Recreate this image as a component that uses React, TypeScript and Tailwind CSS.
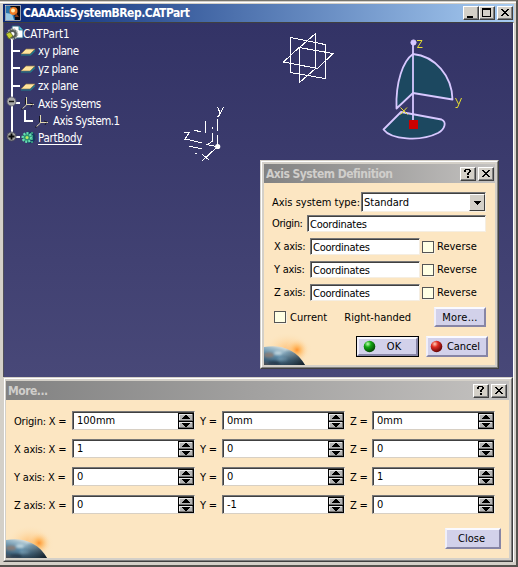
import React from 'react';

function WinButton({ kind }: { kind: 'min' | 'max' | 'close' | 'help' }) {
  return (
    <div className="relative h-[14px] w-[16px] shrink-0 border border-t-white border-l-white border-r-[#404040] border-b-[#404040] bg-[#d4d0c8]">
      <div className="h-full w-full border-r border-b border-[#808080]">
        <svg width="14" height="12" viewBox="0 0 14 12" className="block" shapeRendering="crispEdges" aria-hidden="true">
          {kind === 'min' && <rect x="3" y="9" width="6" height="2" fill="#000" />}
          {kind === 'max' && <path d="M2 1h9v9H2zM3 3v6h7V3z" fill="#000" fillRule="evenodd" />}
          {kind === 'close' && (
            <path
              d="M3 2h2v1h-2zM9 2h2v1h-2zM4 3h2v1h-2zM8 3h2v1h-2zM5 4h4v1h-4zM6 5h2v1h-2zM5 6h4v1h-4zM4 7h2v1h-2zM8 7h2v1h-2zM3 8h2v1h-2zM9 8h2v1h-2z"
              fill="#000"
            />
          )}
          {kind === 'help' && (
            <path d="M4 1h5v1h-5zM3 2h2v2h-2zM8 2h2v2h-2zM7 4h2v1h-2zM6 5h2v2h-2zM6 8h2v2h-2z" fill="#000" />
          )}
        </svg>
      </div>
    </div>
  );
}

function DialogTitle({ text, className }: { text: string; className: string }) {
  return (
    <div className={'flex h-[19px] shrink-0 items-center bg-linear-to-r from-[#828282] to-[#c4c2c0] pl-[2px] ' + className}>
      <span className="grow text-[12px] font-bold whitespace-nowrap text-[#d0cecb]">{text}</span>
      <div className="flex gap-[2px]">
        <WinButton kind="help" />
        <WinButton kind="close" />
      </div>
    </div>
  );
}

function TextField({ value, className }: { value: string; className: string }) {
  return (
    <div
      className={
        'flex shrink-0 items-center border border-t-[#777] border-l-[#777] border-r-[#f5eee2] border-b-[#f5eee2] bg-white ' +
        className
      }
    >
      <div className="flex h-full w-full items-center border-t border-l border-[#404040] pl-px leading-none">
        {value}
      </div>
    </div>
  );
}

function CheckBox() {
  return (
    <div className="size-[12px] shrink-0 border border-[#555] bg-[#ffffe4] shadow-[1px_1px_0_#f8f0e0]" />
  );
}

function PushButton({ children, className }: { children: React.ReactNode; className: string }) {
  return (
    <div
      className={
        'flex shrink-0 items-center justify-center border-2 border-t-[#fafaff] border-l-[#f0effa] border-r-[#8785a5] border-b-[#8785a5] bg-[#d2d1ea] leading-none ' +
        className
      }
    >
      {children}
    </div>
  );
}

function Lamp({ id, light, mid, dark }: { id: string; light: string; mid: string; dark: string }) {
  return (
    <svg width="13" height="13" viewBox="0 0 13 13" className="shrink-0" aria-hidden="true">
      <defs>
        <radialGradient id={id} cx="0.35" cy="0.28" r="0.7">
          <stop offset="0" stopColor={light} />
          <stop offset="0.4" stopColor={mid} />
          <stop offset="1" stopColor={dark} />
        </radialGradient>
      </defs>
      <circle cx="6.5" cy="6.5" r="5.8" fill={'url(#' + id + ')'} />
    </svg>
  );
}

function Planet({ id }: { id: string }) {
  return (
    <svg width="56" height="40" viewBox="0 0 56 40" className="absolute bottom-0 left-0" aria-hidden="true">
      <defs>
        <radialGradient id={id + 'g'} cx="0.5" cy="0.5" r="0.5">
          <stop offset="0" stopColor="#ff9430" />
          <stop offset="0.35" stopColor="#ffb860" stopOpacity="0.75" />
          <stop offset="1" stopColor="#fde7c2" stopOpacity="0" />
        </radialGradient>
        <linearGradient id={id + 'p'} gradientUnits="userSpaceOnUse" x1="14" y1="20" x2="8" y2="42">
          <stop offset="0" stopColor="#e4e6e0" />
          <stop offset="0.2" stopColor="#9fbccb" />
          <stop offset="0.5" stopColor="#5d8aa6" />
          <stop offset="0.8" stopColor="#3c5c74" />
          <stop offset="1" stopColor="#4c4c50" />
        </linearGradient>
        <linearGradient id={id + 's'} gradientUnits="userSpaceOnUse" x1="22" y1="24" x2="40" y2="40">
          <stop offset="0" stopColor="#101820" stopOpacity="0" />
          <stop offset="1" stopColor="#101820" stopOpacity="0.95" />
        </linearGradient>
        <filter id={id + 'b'}>
          <feGaussianBlur stdDeviation="0.9" />
        </filter>
        <clipPath id={id + 'c'}>
          <path d="M0 22 C16 19 32 24 41 40 L0 40Z" />
        </clipPath>
      </defs>
      <ellipse cx="24" cy="25" rx="25" ry="18" fill={'url(#' + id + 'g)'} opacity="0.5" />
      <circle cx="33" cy="25" r="12" fill={'url(#' + id + 'g)'} />
      <g clipPath={'url(#' + id + 'c)'}>
        <rect y="18" width="44" height="22" fill={'url(#' + id + 'p)'} />
        <g filter={'url(#' + id + 'b)'}>
          <ellipse cx="5" cy="30" rx="5" ry="2.5" fill="#9a7a68" opacity="0.7" />
          <ellipse cx="14" cy="28" rx="4" ry="2" fill="#c8dce4" opacity="0.8" />
          <ellipse cx="19" cy="34" rx="5" ry="2" fill="#84aec6" opacity="0.7" />
          <ellipse cx="10" cy="38" rx="6" ry="2" fill="#24384a" opacity="0.8" />
          <ellipse cx="25" cy="28" rx="4" ry="1.5" fill="#7aa6c0" opacity="0.7" />
        </g>
        <rect y="18" width="44" height="22" fill={'url(#' + id + 's)'} />
      </g>
    </svg>
  );
}

function Spinner({ value }: { value: string }) {
  return (
    <div className="flex h-[19px] w-[123px] shrink-0 border border-t-[#777] border-l-[#777] border-r-[#f5eee2] border-b-[#d8d0c4] bg-white">
      <div className="flex w-full border-t border-l border-[#404040]">
        <div className="grow pt-px pl-[3px] leading-[14px]">{value}</div>
        <svg width="16" height="16" viewBox="0 0 16 16" className="shrink-0" shapeRendering="crispEdges" aria-hidden="true">
          <rect width="16" height="16" fill="#000" />
          <path d="M1 1h14v7h-14zM1 9h14v6h-14z" fill="#707070" />
          <path d="M1 1h13v6h-13zM1 9h13v5h-13z" fill="#e8e8e8" />
          <path d="M2 2h12v5h-12zM2 10h12v4h-12z" fill="#b4b4b4" />
          <path d="M7 2h2v1h1v1h1v1h1v1H4v-1h1v-1h1v-1h1zM4 10h8v1h-1v1h-1v1h-1v1h-2v-1h-1v-1h-1v-1h-1z" fill="#000" />
        </svg>
      </div>
    </div>
  );
}

const treeItems: { label: string; cls: string }[] = [
  { label: 'CATPart1', cls: 'pl-[19px] tracking-[0px]' },
  { label: 'xy plane', cls: 'pl-[34px] tracking-[-0.45px]' },
  { label: 'yz plane', cls: 'pl-[34px] tracking-[-0.45px]' },
  { label: 'zx plane', cls: 'pl-[34px] tracking-[-0.45px]' },
  { label: 'Axis Systems', cls: 'pl-[34px] tracking-[-0.5px]' },
  { label: 'Axis System.1', cls: 'pl-[49px] tracking-[-0.5px]' },
  { label: 'PartBody', cls: 'pl-[34px] tracking-[-0.3px] underline underline-offset-2' },
];

function PlaneIcon({ y }: { y: number }) {
  return (
    <g transform={'translate(0 ' + y + ')'}>
      <path d="M21 5L26 0H35L30 5Z" fill="#ffe49c" stroke="#8f7850" strokeWidth="0.7" />
      <path d="M21 6H30.5L35 1.5" stroke="#20808c" strokeWidth="1.2" fill="none" />
    </g>
  );
}

function AxisIcon({ x, y }: { x: number; y: number }) {
  return (
    <g transform={'translate(' + x + ' ' + y + ')'} fill="none" strokeWidth="1">
      <path d="M5.5 0V8L1 12M5.5 7.5H13" stroke="#e0d8b0" />
      <path d="M4.5 1V7M0 12H2M9 6L12 7M11 8L10 10" stroke="#171722" />
    </g>
  );
}

function Scene() {
  return (
    <svg width="510" height="355" viewBox="4 23 510 355" className="absolute inset-0" aria-hidden="true">
      {/* specification tree branches */}
      <g stroke="#fff" strokeWidth="2" fill="none" shapeRendering="crispEdges">
        <path d="M12 38V137M12 51H20M12 68H20M12 86H20M12 103H20M12 137H20M25 110V121H33" />
      </g>
      <path d="M12 26H19L23 30V38H12Z" fill="#fff" stroke="#28607c" strokeWidth="1" />
      <path d="M19 26V30H23" fill="#58c8dc" stroke="#28607c" strokeWidth="0.7" />
      <circle cx="12.5" cy="34" r="5" fill="#565c58" stroke="#adb1ac" strokeWidth="1.6" strokeDasharray="2 1" />
      <circle cx="12.5" cy="34" r="2" fill="#fff" />
      <path d="M6 34L10 32L13 36L9 39Z" fill="#c6cf30" stroke="#586020" strokeWidth="0.8" />
      <PlaneIcon y={49} />
      <PlaneIcon y={66} />
      <PlaneIcon y={84} />
      <AxisIcon x={21} y={97} />
      <AxisIcon x={35} y={115} />
      <g>
        <circle cx="11.5" cy="101.5" r="4.5" fill="#a8a8a8" stroke="#555566" strokeWidth="0.8" />
        <path d="M9 101.5H14" stroke="#111" strokeWidth="1.5" />
        <circle cx="11.5" cy="136.5" r="4.5" fill="#989898" stroke="#444455" strokeWidth="0.8" />
        <path d="M8.5 136.5H14.5M11.5 133.5V139.5" stroke="#080808" strokeWidth="1.8" />
      </g>
      <circle cx="29.5" cy="137.5" r="6" fill="#123c60" />
      <circle cx="27" cy="137.5" r="4.3" fill="#2c9270" stroke="#66ddb2" strokeWidth="2.4" strokeDasharray="2 1.2" />
      <circle cx="27" cy="137.5" r="1.5" fill="#bdeb60" />
      <path d="M32 132V144" stroke="#44b88c" strokeWidth="1.4" strokeDasharray="2 1" />

      {/* reference planes */}
      <g stroke="#fff" fill="none" strokeWidth="1" shapeRendering="crispEdges">
        <path d="M290.5 37.5L325 44.5V78.5L290.5 72.5Z" />
        <path d="M315.5 33.5V68.5L299.5 82.5V47.5Z" />
        <path d="M283.5 62L299 47.5L333 53.5L317.5 68.5Z" />
      </g>

      {/* model axis system */}
      <g stroke="#fff" fill="none" strokeWidth="1" shapeRendering="crispEdges">
        <path d="M217.5 119V131M217.5 135V145M205.5 121V133M212.5 127V129M212.5 133V141L207 145" />
        <path d="M194 130L201 132M190 140L202 143M206 144.5L217 146.5M189 146L202 149M195 153.5H197M217 147L202 161M202.5 154.5L209.5 160.5" />
        <path d="M184 132.5H189.5L184.5 139.5H190" />
        <path d="M217.5 107L220.5 114M223.5 107L218.5 116.5H217" />
      </g>
      <circle cx="217.7" cy="146.5" r="2.6" fill="#fff" />

      {/* compass */}
      <g fill="#1c4860" stroke="#d8c8ff" strokeWidth="1.8" strokeLinejoin="round">
        <path d="M413 54C403 61 395.5 82 396.5 108.5L413 93L452.5 99.5C452 76 435 56 413 54Z" />
        <path d="M401 112L383.5 129.5C391 139.5 420 142 438 133C445 129 447 122 441.5 119.5Z" />
        <path d="M413 44V121" fill="none" />
        <circle cx="413.5" cy="42.5" r="2.6" fill="#d8c8ff" strokeWidth="1" />
      </g>
      <rect x="409" y="120" width="9" height="9" fill="#cc0000" />
      <g stroke="#e8e030" fill="none" strokeWidth="1">
        <path d="M417 40.5H422L417.5 47.5H422.5" />
        <path d="M400.5 107.5L407.5 114.5M407 107.5L400.5 114.5" />
        <path d="M455.5 98L458.5 104M461.5 98L457.5 107.5H455.5" />
      </g>
    </svg>
  );
}

const axisRows = ['X axis:', 'Y axis:', 'Z axis:'];

function AxisDialog() {
  return (
    <div className="absolute top-[137px] left-[256px] h-[209px] w-[239px] border border-t-[#d4d0c8] border-l-[#d4d0c8] border-r-[#404040] border-b-[#404040] bg-[#d4d0c8]">
      <div className="flex h-full flex-col border border-t-white border-l-white border-r-[#808080] border-b-[#808080] p-[2px]">
        <DialogTitle text="Axis System Definition" className="pr-px tracking-[-0.52px]" />
        <div className="relative grow bg-[#fce6c2]">
          <Planet id="a" />
          <div className="relative flex flex-col pr-[9px]">
            <div className="mt-[9px] flex h-[20px] items-center pl-[8px]">
              <span className="w-[90px] whitespace-nowrap">Axis system type:</span>
              <div className="relative h-[20px] w-[125px]">
                <TextField value="Standard" className="h-[20px] w-[125px]" />
                <div className="absolute top-[2px] right-[1px] flex h-[17px] w-[16px] items-center justify-center border border-t-white border-l-white border-r-[#404040] border-b-[#404040] bg-[#d4d0c8]">
                  <svg width="7" height="4" viewBox="0 0 7 4" shapeRendering="crispEdges" aria-hidden="true">
                    <path d="M0 0h7v1h-1v1h-1v1h-1v1h-1v-1h-1v-1h-1v-1h-1z" fill="#000" />
                  </svg>
                </div>
              </div>
            </div>
            <div className="mt-[3px] flex h-[17px] items-center pl-[8px]">
              <span className="w-[36px] tracking-[-0.4px]">Origin:</span>
              <TextField value="Coordinates" className="h-[17px] w-[179px] tracking-[-0.25px]" />
            </div>
            <div className="mt-[6px] flex flex-col gap-[6px]">
              {axisRows.map((label) => (
                <div key={label} className="flex h-[17px] items-center pl-[10px]">
                  <span className="w-[36px] tracking-[-0.25px] whitespace-nowrap">{label}</span>
                  <TextField value="Coordinates" className="mr-[2px] h-[17px] w-[110px] tracking-[-0.25px]" />
                  <CheckBox />
                  <span className="pl-[3px]">Reverse</span>
                </div>
              ))}
            </div>
            <div className="mt-[6px] flex h-[20px] items-center pl-[10px]">
              <CheckBox />
              <span className="w-[59px] pl-[4px]">Current</span>
              <span className="w-[91px] whitespace-nowrap">Right-handed</span>
              <PushButton className="h-[20px] w-[52px] tracking-[0.2px]">More...</PushButton>
            </div>
            <div className="mt-[9px] flex h-[21px] gap-[7px] pl-[92px]">
              <div className="border border-black">
                <PushButton className="h-[19px] w-[61px] gap-[11px] pr-[11px]">
                  <Lamp id="ok" light="#c0ffb0" mid="#12a812" dark="#064c06" />
                  OK
                </PushButton>
              </div>
              <PushButton className="h-[21px] w-[62px] gap-[4px] pr-[4px] tracking-[-0.1px]">
                <Lamp id="cancel" light="#ffd0b8" mid="#e02c20" dark="#6c0808" />
                Cancel
              </PushButton>
            </div>
          </div>
        </div>
      </div>
    </div>
  );
}

const coordinateRows = [
  { label: 'Origin: X =', values: ['100mm', '0mm', '0mm'] },
  { label: 'X axis: X =', values: ['1', '0', '0'] },
  { label: 'Y axis: X =', values: ['0', '0', '1'] },
  { label: 'Z axis: X =', values: ['0', '-1', '0'] },
];

function MoreDialog() {
  return (
    <div className="relative h-[185px] w-[510px] border border-t-[#d4d0c8] border-l-[#d4d0c8] border-r-[#404040] border-b-[#404040] bg-[#d4d0c8]">
      <div className="flex h-full flex-col border border-t-white border-l-white border-r-[#808080] border-b-[#808080] pt-[2px] pr-[2px] pb-[2px] pl-px">
        <DialogTitle text="More..." className="pr-[2px] tracking-[-0.5px]" />
        <div className="relative flex grow flex-col bg-[#fce6c2]">
          <Planet id="m" />
          <div className="relative mt-[11px] flex flex-col gap-[9px] pl-[8px]">
            {coordinateRows.map((row) => (
              <div key={row.label} className="flex h-[19px] items-center">
                <span className="w-[58px] pt-[2px] tracking-[-0.2px] whitespace-nowrap">{row.label}</span>
                <Spinner value={row.values[0]} />
                <span className="w-[27px] pt-[2px] pl-[5px] tracking-[-0.2px] whitespace-nowrap">Y =</span>
                <Spinner value={row.values[1]} />
                <span className="w-[27px] pt-[2px] pl-[5px] tracking-[-0.2px] whitespace-nowrap">Z =</span>
                <Spinner value={row.values[2]} />
              </div>
            ))}
          </div>
          <div className="relative mt-[14px] flex justify-end pr-[8px]">
            <PushButton className="h-[21px] w-[56px] pr-[3px]">Close</PushButton>
          </div>
        </div>
      </div>
    </div>
  );
}

export default function App() {
  return (
    <div className="flex h-[567px] w-[518px] flex-col overflow-hidden border-t border-r-2 border-b-2 border-t-[#77756e] border-r-[#55534e] border-b-[#55534e] bg-[#d4d0c8] font-['DejaVu_Sans_Condensed','DejaVu_Sans',sans-serif] text-[11px] leading-none text-black [font-stretch:condensed]">
      <div className="mt-px h-px bg-white" />
      <div className="mt-px ml-[3px] flex h-[18px] w-[511px] shrink-0 items-center bg-linear-to-r from-[#0c2874] to-[#a8ccf2] pr-px">
        <svg width="16" height="16" viewBox="0 0 16 16" className="ml-[2px] shrink-0" aria-hidden="true">
          <rect width="16" height="16" fill="#080810" />
          <rect x="0.5" y="0.5" width="15" height="15" fill="none" stroke="#d8e0f0" strokeWidth="0.7" />
          <path d="M1 1H5L9 7L10 15H1Z" fill="#2874ac" />
          <path d="M1 8L7 9L9 15H1Z" fill="#98c8e4" />
          <circle cx="8.5" cy="6" r="4" fill="#f07c24" />
          <circle cx="8" cy="5.5" r="2" fill="#fff0b4" />
          <path d="M11 8L14 12L10 12Z" fill="#823d1e" />
        </svg>
        <span className="grow pl-[2px] text-[12px] font-bold tracking-[-0.5px] whitespace-nowrap text-white">
          CAAAxisSystemBRep.CATPart
        </span>
        <div className="flex">
          <WinButton kind="min" />
          <WinButton kind="max" />
        </div>
        <div className="ml-[2px]">
          <WinButton kind="close" />
        </div>
      </div>
      <div className="relative ml-[3px] h-[355px] w-[511px] shrink-0 border-t border-l border-r border-t-[#404040] border-l-[#505058] border-r-white bg-linear-to-b from-[#333366] to-[#484878]">
        <Scene />
        <div className="relative flex flex-col pt-[3px]">
          {treeItems.map((item) => (
            <div key={item.label} className={'h-[17.4px] text-[11.5px] leading-[17.4px] whitespace-nowrap text-white ' + item.cls}>
              {item.label}
            </div>
          ))}
        </div>
        <AxisDialog />
      </div>
      <div className="ml-[3px] w-[511px] border-r border-white">
        <MoreDialog />
      </div>
    </div>
  );
}
